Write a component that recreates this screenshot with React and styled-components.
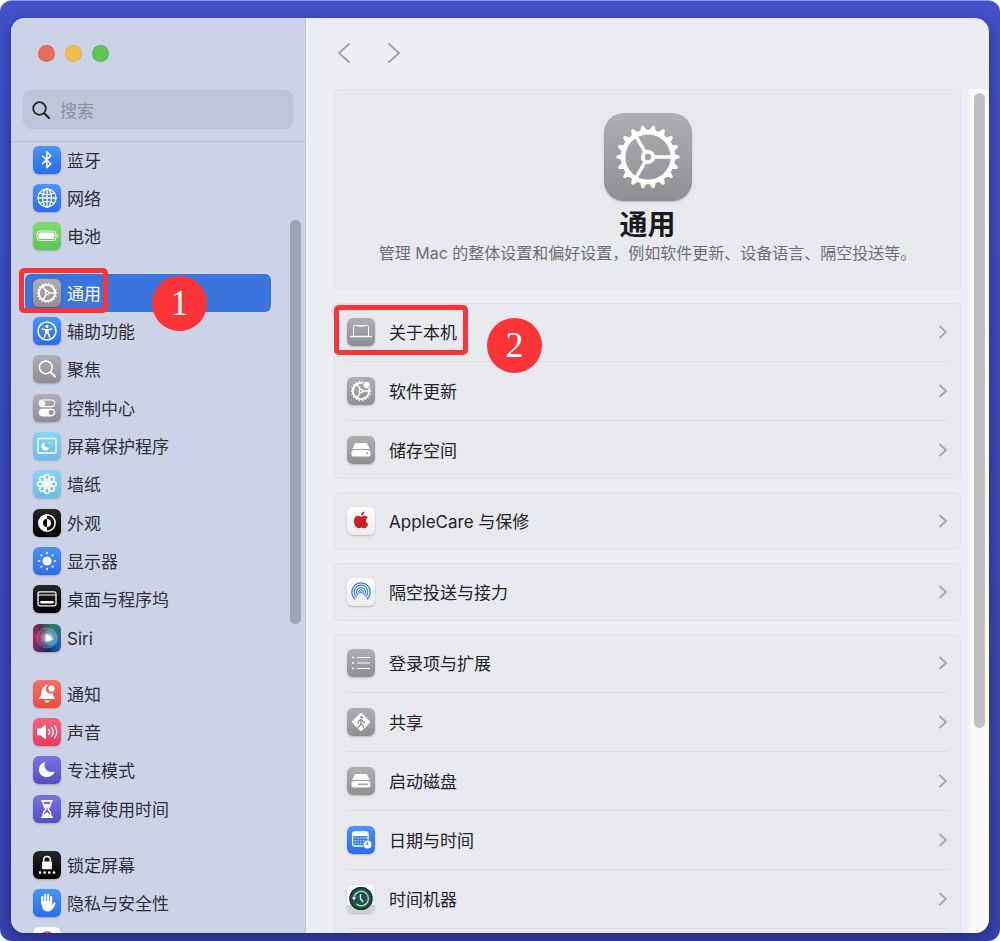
import React from "react";
import styled, { createGlobalStyle } from "styled-components";

const GlobalStyle = createGlobalStyle`
  * { box-sizing: border-box; }
  body {
    margin: 0;
    background: #fff;
    font-family: Inter, "Noto Sans CJK SC", sans-serif;
    font-size: 17px;
    line-height: 26px;
    color: #222328;
  }
  button, input { font: inherit; color: inherit; }
  ul { list-style: none; margin: 0; padding: 0; }
`;

const fills = {
  blue: "linear-gradient(#4a93fb, #2b6ceb)",
  green: "linear-gradient(#7fdc74, #5cc653)",
  gray: "linear-gradient(#afafb3, #8e8e93)",
  sky: "linear-gradient(#8ad5f6, #6bbbe6)",
  black: "linear-gradient(#262626, #000)",
  red: "linear-gradient(#f57166, #ec4a3c)",
  pink: "linear-gradient(#f5637f, #e93d5d)",
  purple: "linear-gradient(#7b75dc, #544dc4)",
  white: "linear-gradient(#fdfdfd, #ebebec)",
  siri: "radial-gradient(circle at 55% 50%, #f4fbff 0 6%, rgba(160,190,235,.7) 22%, transparent 50%), conic-gradient(from 20deg, #2f7f70, #2b6c86, #1d5fb0, #123052, #6b2a63, #b3275c, #5b2b4c, #2f7f70)",
};

const Desktop = styled.div`
  height: 100vh;
  min-height: 600px;
  padding: 17px 11px 8px;
  display: flex;
  border-top: 1px solid #8a94ee;
  border-radius: 12px;
  background: linear-gradient(#4350ca, #3e49b8 50%, #3b43ae);
  overflow: hidden;
`;

const Window = styled.div`
  flex: 1;
  min-width: 0;
  display: flex;
  border-radius: 14px;
  overflow: hidden;
  background: #ecedf2;
  box-shadow: 0 5px 14px rgba(10, 16, 70, 0.5);
`;

const Sidebar = styled.aside`
  flex: none;
  width: 295px;
  display: flex;
  flex-direction: column;
  background: #cdd3e7;
  border-right: 1px solid #bdc2d5;
`;

const TrafficLights = styled.div`
  display: flex;
  gap: 10px;
  padding: 27px 27px 28px;
`;

const Light = styled.button`
  width: 17px;
  height: 17px;
  padding: 0;
  border: 1px solid rgba(0, 0, 0, 0.08);
  border-radius: 50%;
  background: ${(p) => p.$color};
`;

const SearchField = styled.label`
  display: flex;
  align-items: center;
  gap: 10px;
  height: 39px;
  margin: 0 12px 12px;
  padding: 0 9px;
  border-radius: 8px;
  background: #bfc5d9;
`;

const SearchInput = styled.input`
  flex: 1;
  min-width: 0;
  padding: 2px 0 0;
  border: 0;
  outline: 0;
  background: none;
  &::placeholder { color: #8a8fa1; opacity: 1; }
`;

const SidebarBody = styled.div`
  position: relative;
  flex: 1;
  min-height: 0;
  box-shadow: inset 0 1px #bbc0d3;
`;

const SidebarScroll = styled.nav`
  height: 100%;
  overflow-y: auto;
  scrollbar-width: none;
  padding: 0 34px 0 14px;
`;

const SidebarGroup = styled.ul`
  & + & { margin-top: 18px; }
`;

const SidebarItem = styled.li`
  position: relative;
  height: 38px;
  &:nth-child(3n) { height: 39px; }
`;

const SidebarLink = styled.a`
  display: flex;
  align-items: center;
  gap: 6px;
  height: 38px;
  padding: 0 8px;
  border-radius: 6px;
  text-decoration: none;
  white-space: nowrap;
  background: ${(p) => (p.$active ? "#3a75de" : "none")};
  color: ${(p) => (p.$active ? "#fff" : "#2f313a")};
`;

const SidebarThumb = styled.div`
  position: absolute;
  right: 4px;
  top: 10%;
  width: 11px;
  height: 51%;
  border-radius: 6px;
  background: #9fa3b3;
`;

const Tile = styled.span`
  flex: none;
  display: block;
  width: ${(p) => (p.$large ? 88 : 28)}px;
  height: ${(p) => (p.$large ? 88 : 28)}px;
  border-radius: ${(p) => (p.$large ? 20 : 6)}px;
  background: ${(p) => fills[p.$fill]};
  box-shadow: 0 1px 2px rgba(0, 0, 0, 0.22);
  overflow: hidden;
  svg { display: block; width: 100%; height: 100%; }
`;

const Main = styled.main`
  flex: 1;
  min-width: 0;
  display: flex;
  flex-direction: column;
`;

const Toolbar = styled.header`
  display: flex;
  gap: 26px;
  height: 71px;
  padding: 23px 26px;
`;

const NavButton = styled.button`
  width: 24px;
  height: 24px;
  padding: 0;
  border: 0;
  background: none;
  color: #a5a6ab;
  svg { display: block; }
`;

const MainBody = styled.div`
  flex: 1;
  min-height: 0;
  display: flex;
`;

const MainScroll = styled.div`
  flex: 1;
  min-width: 0;
  overflow-y: auto;
  scrollbar-width: none;
  display: flex;
  flex-direction: column;
  gap: 13px;
  padding: 0 7px 0 28px;
`;

const ScrollTrack = styled.div`
  flex: none;
  width: 21px;
  padding: 4px 4px 4px 3px;
  border-left: 2px solid #f3f3f6;
  background: #fafafb;
`;

const ScrollThumb = styled.div`
  width: 11px;
  height: 76%;
  margin-left: auto;
  border-radius: 6px;
  background: #c1c1c2;
`;

const Card = styled.section`
  flex: none;
  border-radius: 6px;
  background: #e8e9ee;
  box-shadow: inset 0 0 0 1px #e0e1e6;
`;

const Intro = styled(Card)`
  display: flex;
  flex-direction: column;
  align-items: center;
  height: 201px;
  padding-top: 24px;
  text-align: center;
`;

const Title = styled.h1`
  margin: 8px 0 0;
  font-size: 28px;
  line-height: 32px;
  font-weight: 700;
  color: #1b1b1e;
`;

const Summary = styled.p`
  margin: 0;
  font-size: 16px;
  line-height: 24px;
  color: #6e6f74;
`;

const SettingList = styled.ul`
  padding: 0 13px;
`;

const SettingItem = styled.li`
  position: relative;
  & + & { border-top: 1px solid #dbdce1; }
`;

const SettingButton = styled.button`
  display: flex;
  align-items: center;
  gap: 14px;
  width: 100%;
  height: 58px;
  padding: 0;
  border: 0;
  background: none;
  text-align: left;
  svg { display: block; }
`;

const Label = styled.span`
  flex: 1;
  padding-top: 2px;
`;

const Highlight = styled.div`
  position: absolute;
  left: ${(p) => p.$left}px;
  top: ${(p) => p.$top}px;
  width: ${(p) => p.$width}px;
  height: ${(p) => p.$height}px;
  border: 5px solid #fb3438;
  border-radius: 5px;
  pointer-events: none;
`;

const StepBadge = styled.div`
  position: absolute;
  z-index: 1;
  left: ${(p) => p.$left}px;
  top: ${(p) => p.$top}px;
  width: 55px;
  height: 55px;
  border-radius: 50%;
  background: #fb3438;
  color: #fff;
  font: 36px/55px "Liberation Serif", serif;
  text-align: center;
`;

const line = {
  fill: "none",
  stroke: "#fff",
  strokeWidth: 1.6,
  strokeLinecap: "round",
  strokeLinejoin: "round",
};

const angles = (n, offset = 0) =>
  Array.from({ length: n }, (_, i) => offset + (i * 360) / n);

function Gear({ cx = 44, cy = 44, bold = 0 }) {
  return (
    <g fill="none" stroke="#fff" strokeLinecap="round">
      <circle cx={cx} cy={cy} r="24.900" strokeWidth={4.6 + bold} />
      {angles(18).map((a) => (
        <path
          key={a}
          d={`M${cx + 26} ${cy - 2.8}L${cx + 31} ${cy - 0.8}V${cy + 0.8}L${cx + 26} ${cy + 2.8}Z`}
          fill="#fff"
          strokeWidth="1.200"
          strokeLinejoin="round"
          transform={`rotate(${a} ${cx} ${cy})`}
        />
      ))}
      {angles(3).map((a) => (
        <path
          key={a}
          d={`M${cx + 6} ${cy}H${cx + 25}`}
          strokeWidth={3.4 + bold}
          transform={`rotate(${a} ${cx} ${cy})`}
        />
      ))}
      <circle cx={cx} cy={cy} r="5.200" strokeWidth={4 + bold / 2} />
    </g>
  );
}

const glyphs = {
  bluetooth: <path {...line} strokeWidth="1.5" d="M9.6 10l8.2 7.8-4 4V5.8l4 4L9.6 17.6" />,
  globe: (
    <g {...line} strokeWidth="1.3">
      <circle cx="14" cy="14" r="9" />
      <ellipse cx="14" cy="14" rx="4.4" ry="9" />
      <path d="M5 14h18M14 5v18M6.8 9c4.5 2 9.9 2 14.4 0M6.8 19c4.5-2 9.9-2 14.4 0" />
    </g>
  ),
  battery: (
    <g>
      <rect x="4" y="9" width="19" height="9.5" rx="3" fill="none" stroke="#fff" strokeOpacity=".8" strokeWidth="1" />
      <rect x="5.5" y="10.500" width="16" height="6.5" rx="1.8" fill="#fff" />
      <path d="M24.3 12.2v3.2c1.4-.5 1.4-2.7 0-3.2z" fill="#fff" />
    </g>
  ),
  gear: (
    <g transform="translate(-.3 -.3) scale(.325)">
      <Gear bold={1} />
    </g>
  ),
  accessibility: (
    <g>
      <circle cx="14" cy="14" r="9" {...line} strokeWidth="1.5" />
      <circle cx="14" cy="9.4" r="1.5" fill="#fff" />
      <path {...line} strokeWidth="1.5" d="M9.300 12l3.300.8h2.800l3.300-.8" />
      <path {...line} strokeWidth="1.5" d="M13 12.900v2.800l-1.700 4.500M15 12.900v2.800l1.700 4.500M14 13v3" />
    </g>
  ),
  magnifier: (
    <g {...line} strokeWidth="1.5">
      <circle cx="12.800" cy="12.300" r="6.400" />
      <path d="M17.500 17l4.500 4.500" strokeWidth="2" />
    </g>
  ),
  controls: (
    <g>
      <rect x="6.300" y="6" width="15.400" height="6.600" rx="3.300" {...line} strokeWidth="1.200" />
      <circle cx="9.700" cy="9.300" r="2.600" fill="#fff" />
      <rect x="5.800" y="14.800" width="16.400" height="7.600" rx="3.800" fill="#fff" />
      <circle cx="18.300" cy="18.600" r="2.500" fill="#98989d" />
    </g>
  ),
  screensaver: (
    <g>
      <rect x="5" y="6.500" width="18" height="14.500" rx="1" {...line} strokeWidth="1.300" />
      <path d="M11.500 10.200a4.200 4.200 0 1 0 5 5.400 4.200 4.200 0 0 1-5-5.400z" fill="#fff" />
      <path {...line} strokeWidth="1" d="M15.800 11.200v.1M18.900 13v.1M18 10.200h.1" />
    </g>
  ),
  flower: (
    <g fill="none" stroke="#fff" strokeWidth="1.500">
      {angles(8).map((a) => (
        <ellipse key={a} cx="14" cy="7.300" rx="2.300" ry="2.700" transform={`rotate(${a} 14 14)`} />
      ))}
      <circle cx="14" cy="14" r="2.400" fill="#fff" />
    </g>
  ),
  appearance: (
    <g>
      <circle cx="14" cy="14" r="8.200" {...line} strokeWidth="1.500" />
      <path d="M14 6a8 8 0 0 0 0 16z" fill="#fff" />
      <path d="M14 10a4 4 0 0 0 0 8z" fill="#0a0a0a" />
      <path d="M14 10a4 4 0 0 1 0 8z" fill="#fff" />
    </g>
  ),
  sun: (
    <g>
      <circle cx="14" cy="14" r="4.600" fill="#fff" />
      {angles(8).map((a) => (
        <path key={a} d="M14 6.500V5.600" {...line} strokeWidth="1.700" transform={`rotate(${a} 14 14)`} />
      ))}
    </g>
  ),
  dock: (
    <g>
      <rect x="5" y="6.800" width="18" height="14" rx="1.800" {...line} strokeWidth="1.300" />
      <path d="M5.500 10h17" {...line} strokeWidth="1" />
      <rect x="7.300" y="16" width="13.400" height="2.600" rx=".6" fill="#fff" />
    </g>
  ),
  siri: (
    <g fill="none">
      <circle cx="14" cy="14" r="9.800" stroke="#9fd8d0" strokeOpacity=".35" strokeWidth="1.200" />
      <path d="M12.500 9.800c3 .2 3 3.200 8.800 5.200-4.300 1-6.500 2.800-9.200 2.600 1.600-2 .2-4.600.4-7.800z" fill="#fff" fillOpacity=".75" />
      <path d="M14.500 21.500c4 0 6.800-2.600 7.600-6" stroke="#4aa5f0" strokeOpacity=".7" strokeWidth="1.400" />
    </g>
  ),
  bell: (
    <g fill="#fff">
      <path d="M14.800 5.200c-.9-1.200-2.600-.6-2.500.8C9.600 7 8.700 9.200 8.500 12.200c-.2 3.200-1.100 4.300-2.500 6v.9h16v-.9c-1.400-1.600-2.300-2.700-2.500-5.400a4.300 4.300 0 0 1-4.700-7.600z" />
      <circle cx="18.500" cy="8.600" r="3.100" />
      <path d="M11.500 20.600h5c-.5 2.700-4.500 2.700-5 0z" />
    </g>
  ),
  speaker: (
    <g>
      <path d="M4 11.600c0-.6.4-1 1-1h2.600L12 6.900c.5-.4 1-.1 1 .5v13c0 .6-.5.900-1 .5l-4.400-3.700H5c-.6 0-1-.4-1-1z" fill="#fff" />
      <path {...line} strokeWidth="1.300" d="M15.700 11.300c1.200 1.600 1.200 3.600 0 5.200M18.500 9.500c2.200 2.700 2.200 6.100 0 8.800M21.400 7.500c3 3.900 3 8.800 0 12.700" />
    </g>
  ),
  moon: <path d="M11 6.300c.5-.4 1 0 .8.500-1.600 5.600 3 10.300 9 8.900.6-.1.900.3.600.8-3.500 6.500-13.200 6.100-15.200-.7-1-3.700.9-7.700 4.800-9.500z" fill="#fff" />,
  hourglass: (
    <g>
      <path {...line} strokeWidth="1.800" d="M8.900 5.800h10.200M8.900 22.200h10.200" />
      <path {...line} strokeWidth="1.300" d="M10 6.500c0 4 1 5.500 3 7.500-2 2-3 3.500-3 7.500M18 6.500c0 4-1 5.500-3 7.500 2 2 3 3.500 3 7.500" />
      <path d="M10.800 9h6.400c-.5 2-2 3-3.200 4.500C12.800 12 11.300 11 10.800 9zM10.500 21.500c.3-2.500 1.500-2.500 3.500-4.500 2 2 3.200 2 3.500 4.500z" fill="#fff" />
    </g>
  ),
  lock: (
    <g>
      <path d="M10.700 11V8.800c0-4.300 6.600-4.300 6.600 0V11" {...line} strokeWidth="1.500" />
      <rect x="9" y="10.500" width="10" height="7.700" rx="1.300" fill="#fff" />
      {[7, 11.7, 16.3, 21].map((x) => (
        <circle key={x} cx={x} cy="21.600" r="1.300" fill="#fff" />
      ))}
    </g>
  ),
  hand: (
    <g {...line} strokeWidth="2.100">
      <path d="M9.200 14.500V8M12.200 13V5.800M15.200 13V5.800M18.200 14.500V8" />
      <path d="M9.200 12.500h9l.3 5 2.600-3.700c.6-.5 1.300 0 1 .6-1.500 3.300-2.600 7.500-7.100 7.600-4.500.1-5.800-2.800-5.800-8.200z" fill="#fff" strokeWidth="1" />
    </g>
  ),
  fingerprint: (
    <g fill="none" stroke="#e5485d" strokeWidth="1.500">
      <path d="M7 12c1.500-9.300 12.500-9.300 14 0M10 13c.8-6.500 7.200-6.500 8 0" />
    </g>
  ),
  laptop: (
    <g {...line} strokeWidth="1">
      <path d="M6.500 17.500V8.500c0-.6.4-1 1-1h13c.6 0 1 .4 1 1v9" />
      <path d="M12 7.900h4M3.800 18.500h20.400" strokeWidth="1.500" />
    </g>
  ),
  update: (
    <g>
      <g transform="translate(-.3 -.3) scale(.325)">
        <Gear bold={1} />
      </g>
      <circle cx="19.500" cy="7.800" r="4.200" fill="#a5a5a9" />
      <circle cx="19.500" cy="7.800" r="3.100" fill="#fff" />
    </g>
  ),
  drive: (
    <g fill="#fff">
      <path d="M9.300 7h9.400c.9 0 1.500.4 1.900 1.200l2.300 5c-.6-.2-1.100-.3-1.700-.3H6.800c-.6 0-1.100.1-1.700.3l2.300-5C7.800 7.400 8.400 7 9.300 7z" />
      <rect x="4.500" y="14" width="19" height="6.500" rx="2.600" />
      <circle cx="20.300" cy="17.300" r="1" fill="#96969a" />
    </g>
  ),
  startup: (
    <g fill="#fff">
      <path d="M9.300 7h9.400c.9 0 1.500.4 1.900 1.200l2.300 5c-.6-.2-1.100-.3-1.700-.3H6.800c-.6 0-1.100.1-1.700.3l2.300-5C7.800 7.400 8.400 7 9.300 7z" />
      <rect x="4.500" y="14" width="19" height="6.500" rx="2.600" />
      <rect x="11" y="16.500" width="10" height="1.500" rx=".7" fill="#a5a5a9" />
    </g>
  ),
  apple: (
    <g fill="#c3242d">
      <path d="M14.200 9.700c.8 0 1.900-.9 3.500-.9 1.200 0 2.400.6 3.100 1.700-2.700 1.600-2.300 5.300.5 6.400-.8 2.100-2.200 4.300-3.800 4.300-1.200 0-1.600-.8-3-.8s-1.900.8-3 .8C9.300 21.200 6.900 17.600 6.900 14c0-3.300 2-5.200 4.200-5.200 1.400 0 2.400.9 3.100.9z" />
      <path d="M14.100 8.500c-.2-2 1.400-3.800 3.200-4.100.2 2-1.300 3.900-3.200 4.100z" />
    </g>
  ),
  airdrop: (
    <g fill="none" stroke="#3f7fe6" strokeWidth="1.200">
      <path d="M8.200 21.300a9.200 9.200 0 1 1 11.600 0" />
      <path d="M9.600 19.200a6.800 6.800 0 1 1 8.800 0" />
      <path d="M11 17.400a4.500 4.500 0 1 1 6 0" />
      <path d="M12.400 15.700a2.300 2.300 0 1 1 3.200 0" />
      <circle cx="14" cy="14.200" r="1" fill="#3f7fe6" stroke="none" />
    </g>
  ),
  list: (
    <g {...line} strokeWidth="1.200">
      <path d="M10.500 8.500h12M10.500 14h12M10.500 19.500h12" />
      <path d="M6 8.500h.1M6 14h.1M6 19.500h.1" strokeWidth="2" />
    </g>
  ),
  sharing: (
    <g>
      <rect x="7.200" y="7.200" width="13.600" height="13.600" rx="1.600" fill="#fff" transform="rotate(45 14 14)" />
      <circle cx="14.500" cy="9.300" r="1.300" fill="#8e8e93" />
      <path d="M14.200 11.500l-.5 4 2.200 1.500.5 2.800M13.700 15.500l-.6 2-1.900 2.200M11.300 15v-2l2.500-1.400 1.400.6.800 1.600 1.700.8" {...line} stroke="#8e8e93" strokeWidth="1.300" />
    </g>
  ),
  calendar: (
    <g>
      <rect x="5.600" y="6" width="15.500" height="14" rx="1.800" {...line} strokeWidth="1.300" />
      <path d="M5.600 6.500h15.500V10H5.600z" fill="#fff" />
      {[12, 14.6, 17.2].map((y) =>
        [8.3, 11, 13.7, 16.4, 18.9].map((x) => (
          <rect key={`${x}-${y}`} x={x - 0.6} y={y - 0.6} width="1.200" height="1.200" fill="#fff" fillOpacity=".8" />
        ))
      )}
      <circle cx="20.500" cy="18.500" r="4.900" fill="#3a7ff3" />
      <circle cx="20.500" cy="18.500" r="4" fill="#fff" />
      <path d="M20.700 16.200v2.500h-1.600" {...line} stroke="#2f73ee" strokeWidth="1" />
    </g>
  ),
  timeMachine: (
    <g fill="none">
      <path d="M0 20h28v8H0z" fill="#cfd1d3" />
      <circle cx="14" cy="13.500" r="11.500" fill="#1f514b" />
      <circle cx="14" cy="13.500" r="11" stroke="#15302e" strokeWidth="1.200" />
      <path d="M7 13.500a7.200 7.200 0 1 1 2.200 5.200" stroke="#a9cdc5" strokeWidth="1.500" />
      <path d="M4.700 12.200h4.600L7 15.500z" fill="#d3e6e1" />
      <path d="M13.500 9v5l2.600 3" stroke="#d3e6e1" strokeWidth="1.500" />
    </g>
  ),
};

const sidebarGroups = [
  [
    ["蓝牙", "bluetooth", "blue"],
    ["网络", "globe", "blue"],
    ["电池", "battery", "green"],
  ],
  [
    ["通用", "gear", "gray"],
    ["辅助功能", "accessibility", "blue"],
    ["聚焦", "magnifier", "gray"],
    ["控制中心", "controls", "gray"],
    ["屏幕保护程序", "screensaver", "sky"],
    ["墙纸", "flower", "sky"],
    ["外观", "appearance", "black"],
    ["显示器", "sun", "blue"],
    ["桌面与程序坞", "dock", "black"],
    ["Siri", "siri", "siri"],
  ],
  [
    ["通知", "bell", "red"],
    ["声音", "speaker", "pink"],
    ["专注模式", "moon", "purple"],
    ["屏幕使用时间", "hourglass", "purple"],
  ],
  [
    ["锁定屏幕", "lock", "black"],
    ["隐私与安全性", "hand", "blue"],
    ["", "fingerprint", "white"],
  ],
];

const settingGroups = [
  [
    ["关于本机", "laptop", "gray"],
    ["软件更新", "update", "gray"],
    ["储存空间", "drive", "gray"],
  ],
  [["AppleCare 与保修", "apple", "white"]],
  [["隔空投送与接力", "airdrop", "white"]],
  [
    ["登录项与扩展", "list", "gray"],
    ["共享", "sharing", "gray"],
    ["启动磁盘", "startup", "gray"],
    ["日期与时间", "calendar", "blue"],
    ["时间机器", "timeMachine", "white"],
    ["", "fingerprint", "white"],
  ],
];

function Icon({ name, fill }) {
  return (
    <Tile $fill={fill}>
      <svg viewBox="0 0 28 28" aria-hidden="true">{glyphs[name]}</svg>
    </Tile>
  );
}

export default function App() {
  return (
    <>
      <GlobalStyle />
      <Desktop>
        <Window>
          <Sidebar>
            <TrafficLights>
              <Light $color="#ed6a5f" aria-label="关闭" />
              <Light $color="#f5bf4f" aria-label="最小化" />
              <Light $color="#61c555" aria-label="缩放" />
            </TrafficLights>
            <SearchField>
              <svg width="18" height="18" viewBox="0 0 18 18" fill="none" stroke="#222329" strokeWidth="1.8" strokeLinecap="round" aria-hidden="true">
                <circle cx="7.5" cy="7.5" r="6.3" />
                <path d="M12.2 12.2L17 17" strokeWidth="2.2" />
              </svg>
              <SearchInput type="text" placeholder="搜索" aria-label="搜索" />
            </SearchField>
            <SidebarBody>
              <SidebarScroll>
                {sidebarGroups.map((group, g) => (
                  <SidebarGroup key={g}>
                    {group.map(([label, icon, fill]) => {
                      const active = label === "通用";
                      return (
                        <SidebarItem key={icon}>
                          <SidebarLink href="#" $active={active}>
                            <Icon name={icon} fill={fill} />
                            <Label>{label}</Label>
                          </SidebarLink>
                          {active && (
                            <>
                              <Highlight $left={-6} $top={-6} $width={89} $height={45} />
                              <StepBadge $left={127} $top={2}>1</StepBadge>
                            </>
                          )}
                        </SidebarItem>
                      );
                    })}
                  </SidebarGroup>
                ))}
              </SidebarScroll>
              <SidebarThumb />
            </SidebarBody>
          </Sidebar>
          <Main>
            <Toolbar>
              <NavButton aria-label="后退">
                <svg width="24" height="24" viewBox="0 0 24 24" fill="none" stroke="currentColor" strokeWidth="2" strokeLinecap="round" strokeLinejoin="round">
                  <path d="M17 3L7 12l10 9" />
                </svg>
              </NavButton>
              <NavButton aria-label="前进">
                <svg width="24" height="24" viewBox="0 0 24 24" fill="none" stroke="currentColor" strokeWidth="2" strokeLinecap="round" strokeLinejoin="round">
                  <path d="M7 3l10 9-10 9" />
                </svg>
              </NavButton>
            </Toolbar>
            <MainBody>
              <MainScroll>
                <Intro>
                  <Tile $fill="gray" $large>
                    <svg viewBox="0 0 88 88" aria-hidden="true"><Gear /></svg>
                  </Tile>
                  <Title>通用</Title>
                  <Summary>管理 Mac 的整体设置和偏好设置，例如软件更新、设备语言、隔空投送等。</Summary>
                </Intro>
                {settingGroups.map((group, g) => (
                  <Card key={g}>
                    <SettingList>
                      {group.map(([label, icon, fill]) => (
                        <SettingItem key={icon}>
                          <SettingButton>
                            <Icon name={icon} fill={fill} />
                            <Label>{label}</Label>
                            <svg width="10" height="16" viewBox="0 0 10 16" fill="none" stroke="#a9aaaf" strokeWidth="2" strokeLinecap="round" strokeLinejoin="round" aria-hidden="true">
                              <path d="M2 2.5L8 8l-6 5.5" />
                            </svg>
                          </SettingButton>
                          {label === "关于本机" && (
                            <>
                              <Highlight $left={-13} $top={2} $width={134} $height={50} />
                              <StepBadge $left={140} $top={15}>2</StepBadge>
                            </>
                          )}
                        </SettingItem>
                      ))}
                    </SettingList>
                  </Card>
                ))}
              </MainScroll>
              <ScrollTrack>
                <ScrollThumb />
              </ScrollTrack>
            </MainBody>
          </Main>
        </Window>
      </Desktop>
    </>
  );
}
